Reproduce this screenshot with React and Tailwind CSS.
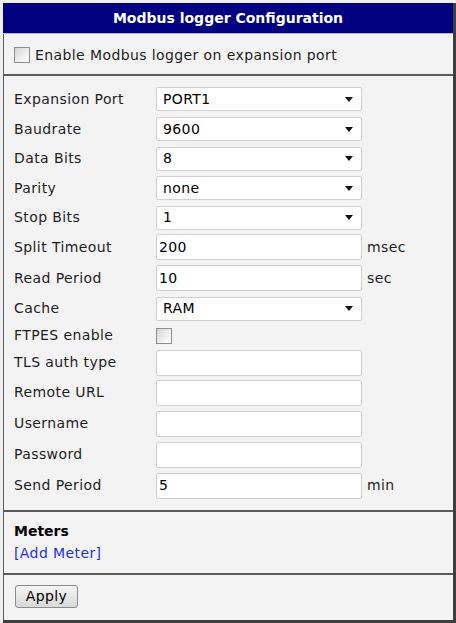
import React from "react";

const font = { fontFamily: '"DejaVu Sans", Verdana, sans-serif' };

function Check() {
  return (
    <span className="inline-block w-[16px] h-[16px] border border-[#8e8e8e] bg-gradient-to-br from-[#d4d4d4] via-[#ececec] to-[#ffffff] shrink-0" />
  );
}

function Select({ value }) {
  return (
    <div className="w-[206px] h-[24px] bg-white border border-[#d0d0d0] rounded-[2px] flex items-center justify-between pl-[6px] pr-[8px] text-[14px] tracking-[0.4px] text-black">
      <span>{value}</span>
      <svg width="8" height="5" viewBox="0 0 8 5">
        <polygon points="0,0 8,0 4,5" fill="#111" />
      </svg>
    </div>
  );
}

function Input({ value }) {
  return (
    <div className="w-[206px] h-[26px] bg-white border border-[#cfcfcf] rounded-[2px] flex items-center pl-[2px] text-[14px] tracking-[0.4px] text-black">
      {value}
    </div>
  );
}

const rows = [
  { label: "Expansion Port", type: "select", value: "PORT1", h: "h-[30px]" },
  { label: "Baudrate", type: "select", value: "9600", h: "h-[30px]" },
  { label: "Data Bits", type: "select", value: "8", h: "h-[29px]" },
  { label: "Parity", type: "select", value: "none", h: "h-[30px]" },
  { label: "Stop Bits", type: "select", value: "1", h: "h-[29px]" },
  { label: "Split Timeout", type: "input", value: "200", unit: "msec", h: "h-[30px]" },
  { label: "Read Period", type: "input", value: "10", unit: "sec", h: "h-[32px]" },
  { label: "Cache", type: "select", value: "RAM", h: "h-[29px]" },
  { label: "FTPES enable", type: "check", h: "h-[25px]" },
  { label: "TLS auth type", type: "input", value: "", h: "h-[29px]" },
  { label: "Remote URL", type: "input", value: "", h: "h-[31px]" },
  { label: "Username", type: "input", value: "", h: "h-[31px]" },
  { label: "Password", type: "input", value: "", h: "h-[31px]" },
  { label: "Send Period", type: "input", value: "5", unit: "min", h: "h-[31px]" },
];

export default function App() {
  return (
    <div className="w-[456px] h-[623px] bg-[#efefef] pt-[3px] pl-[3px] overflow-hidden" style={font}>
      <div className="h-[620px] flex flex-col bg-[#f3f3f3] border-r-[3px] border-b-[3px] border-r-[#3e3e3e] border-b-[#3e3e3e]">
        <div className="h-[31px] bg-[#000080] border-b border-[#b4b4c8] flex items-center justify-center text-white font-bold text-[14px]">
          Modbus logger Configuration
        </div>
        <div className="flex-1 flex flex-col border-l border-[#5c5c5c]">
          <div className="h-[40px] flex items-center pt-[2px] pl-[10px] gap-[5px] text-[14px] tracking-[0.4px] text-[#1e1e1e]">
            <Check />
            <span>Enable Modbus logger on expansion port</span>
          </div>
          <div className="border-t-2 border-[#5a5a5a] pt-[8px] pb-[9px] pl-[10px] flex flex-col">
            {rows.map((r) => (
              <div key={r.label} className={`${r.h} flex items-center text-[14px] tracking-[0.4px] text-[#1e1e1e]`}>
                <div className="w-[142px] shrink-0">{r.label}</div>
                {r.type === "select" && <Select value={r.value} />}
                {r.type === "input" && <Input value={r.value} />}
                {r.type === "check" && <Check />}
                {r.unit && <span className="ml-[5px]">{r.unit}</span>}
              </div>
            ))}
          </div>
          <div className="border-t-2 border-[#5a5a5a] h-[63px] pt-[8px] pl-[10px] text-[14px] tracking-[0.4px]">
            <div className="h-[22px] flex items-center font-bold tracking-normal text-black">Meters</div>
            <div className="h-[22px] flex items-center text-[#2233dd]">[Add Meter]</div>
          </div>
          <div className="border-t-2 border-[#5a5a5a] flex-1 pt-[10px] pl-[11px]">
            <div className="w-[63px] h-[23px] border border-[#8a8a8a] rounded-[3px] bg-gradient-to-b from-[#f6f6f6] to-[#d8d8d8] flex items-center justify-center text-[14px] tracking-[0.4px] text-black">
              Apply
            </div>
          </div>
        </div>
      </div>
    </div>
  );
}
